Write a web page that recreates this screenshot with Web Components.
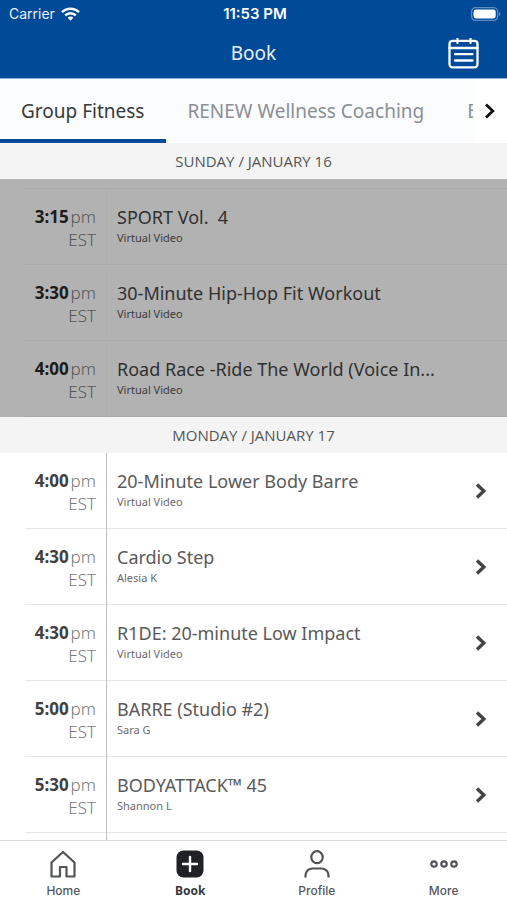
<!DOCTYPE html>
<html lang="en">
<head>
<meta charset="utf-8">
<meta name="viewport" content="width=device-width, initial-scale=1">
<title>Book</title>
<style>
body { margin: 0; font-family: "Noto Sans", "Open Sans", sans-serif; color: #4a4a4a; }
</style>
</head>
<body>
<booking-app></booking-app>

<script>
const define = (name, html, setup) => {
  const template = document.createElement('template');
  template.innerHTML = html;
  customElements.define(name, class extends HTMLElement {
    constructor() {
      super();
      this.attachShadow({ mode: 'open' }).append(template.content.cloneNode(true));
    }
    connectedCallback() { if (setup) setup(this, this.shadowRoot); }
  });
};

define('status-bar', `
<style>
:host { display: grid; grid-template-columns: 1fr auto 1fr; align-items: center; height: 28px; padding: 0 6px 0 9px; font: 400 14px/20px Inter, sans-serif; color: #e9f0fa; }
.left { display: flex; align-items: center; gap: 6px; }
.time { font-weight: 600; font-size: 15px; color: #fff; }
.battery { justify-self: end; }
svg { display: block; }
</style>
<div class="left"><span>Carrier</span>
<svg width="19" height="14" viewBox="0 0 19 14" fill="none" stroke="#fff" stroke-width="2.4"><path d="M1 5.2C5.7.6 13.3.6 18 5.2M4.2 8.4c3-2.9 7.6-2.9 10.6 0"/><path d="M9.500 13.800 6.600 10.800c1.600-1.600 4.200-1.600 5.800 0z" fill="#fff" stroke="none"/></svg></div>
<span class="time">11:53 PM</span>
<svg class="battery" width="30" height="14" viewBox="0 0 30 14"><rect x=".6" y=".6" width="26" height="12.800" rx="4" fill="none" stroke="#5f8cc0" stroke-width="1.200"/><rect x="2.500" y="2.500" width="22.200" height="9" rx="2.400" fill="#fff"/><path d="M28 4.800c2 .8 2 3.600 0 4.400z" fill="#5f8cc0"/></svg>
`);

define('title-bar', `
<style>
:host { display: grid; grid-template-columns: 1fr auto 1fr; align-items: center; height: 50px; padding: 0 28px; color: #e9f0fa; }
h1 { grid-column: 2; margin: 0; font-size: 19px; line-height: 28px; font-weight: 400; }
button { justify-self: end; border: 0; padding: 0; background: none; }
svg { display: block; }
</style>
<h1>Book</h1>
<button aria-label="Calendar"><svg width="31" height="31" viewBox="0 0 31 31" fill="none" stroke="#fff" stroke-width="2.300" stroke-linecap="round"><rect x="1.500" y="2.800" width="28" height="26.500" rx="3"/><path d="M1.500 10h28M9.500 1v4M22.500 1v4M7 16.200h17.500M7 22.500h17.500"/></svg></button>
`);

define('category-tabs', `
<style>
:host { display: flex; height: 64px; background: #fafcfe; }
nav { display: flex; flex: 1; min-width: 0; overflow: hidden; }
a { flex: none; display: flex; align-items: center; padding: 0 22px 0 21px; box-sizing: border-box; border-bottom: 4px solid transparent; font-size: 19px; line-height: 26px; color: #8b8e94; text-decoration: none; white-space: nowrap; }
a.on { color: #37393d; border-color: #004a98; }
a span { padding-top: 4px; }
button { flex: none; width: 34px; border: 0; padding: 0; background: #fff; }
svg { display: block; margin: 0 auto; }
</style>
<nav aria-label="Categories"><a class="on" href="#group"><span>Group Fitness</span></a><a href="#renew"><span>RENEW Wellness Coaching</span></a><a href="#e"><span>E</span></a></nav>
<button aria-label="Next categories"><svg width="12" height="16" viewBox="0 0 12 16" fill="none" stroke="#111" stroke-width="2.800"><path d="M2 1.500 8.800 8 2 14.500"/></svg></button>
`);

define('day-heading', `
<style>
:host { display: block; background: #f4f4f4; }
h2 { margin: 0; font-family: "Open Sans", sans-serif; font-size: 15px; line-height: 36px; font-weight: 400; text-align: center; color: #555; }
</style>
<h2><slot></slot></h2>
`);

define('class-list', `
<style>
:host { display: block; --rule: #e6e6e6; --divider: #bdbdbd; --strong: #404040; --title: #5a5a5a; --muted: #777; --sub: #6a6a6a; }
:host([past]) { background: #b2b2b2; --rule: #a9a9a9; --divider: #afafaf; --strong: #1c1c1c; --title: #303030; --muted: #555; --sub: #3c3c3c; }
</style>
<slot></slot>
`);

define('list-edge', `
<style>
:host { display: block; height: 9px; margin-left: 25px; border-bottom: 1px solid var(--rule); }
</style>
`);

define('list-tail', `
<style>
:host { display: block; height: 76px; margin-left: 106px; border-left: 1px solid var(--divider); }
</style>
`);

define('class-row', `
<style>
:host { display: block; }
button { display: grid; grid-template-columns: 71px 1fr auto; width: 100%; height: 76px; padding: 0 20px 0 25px; border: 0; background: linear-gradient(var(--rule), var(--rule)) 25px 100% / 100% 1px no-repeat; font: inherit; text-align: left; color: inherit; }
.time { text-align: right; padding-top: 16px; font-size: 17px; line-height: 23px; font-weight: 300; color: var(--muted); }
b { font-weight: 700; color: var(--strong); margin-right: 2px; }
.time span { display: block; }
.info { align-self: stretch; min-width: 0; margin-left: 10px; padding: 15px 0 0 10px; border-left: 1px solid var(--divider); box-sizing: border-box; }
.title { display: block; font-size: 18px; line-height: 26px; color: var(--title); white-space: pre; overflow: hidden; text-overflow: ellipsis; }
.sub { display: block; font-size: 11px; line-height: 16px; color: var(--sub); }
svg { align-self: center; display: block; }
:host([past]) svg { visibility: hidden; }
</style>
<button><span class="time"><span><b></b>pm</span><span>EST</span></span>
<span class="info"><span class="title"></span><span class="sub"></span></span>
<svg width="12" height="16" viewBox="0 0 12 16" fill="none" stroke="#444" stroke-width="3.400"><path d="M2 1.500 8.800 8 2 14.500"/></svg></button>
`, (host, root) => {
  root.querySelector('b').textContent = host.getAttribute('time');
  root.querySelector('.title').textContent = host.getAttribute('name');
  root.querySelector('.sub').textContent = host.getAttribute('by');
});

define('nav-item', `
<style>
:host { display: block; flex: 1; }
a { display: flex; flex-direction: column; align-items: center; gap: 4px; padding-top: 9px; font: 500 12px/18px Inter, sans-serif; color: #55585c; text-decoration: none; }
:host([current]) a { font: 700 12px/18px "Noto Sans", sans-serif; color: #36383c; }
</style>
<a href="#"><slot name="icon"></slot><slot></slot></a>
`);

define('bottom-nav', `
<style>
:host { display: flex; height: 60px; box-sizing: border-box; border-top: 1px solid #dcdcdc; background: #fff; }
svg { display: block; }
</style>
<nav-item><svg slot="icon" width="28" height="28" viewBox="0 0 28 28" fill="none" stroke="#505357" stroke-width="2.200" stroke-linejoin="round"><path d="M2.500 12.500 14 2l11.500 10.500V26.500h-8V17h-6.500v9.500H2.500z"/></svg>Home</nav-item>
<nav-item current><svg slot="icon" width="28" height="28" viewBox="0 0 28 28"><rect x=".5" y=".5" width="27" height="27" rx="7" fill="#1f2124"/><path d="M14 7v14M7 14h14" stroke="#fff" stroke-width="2.400" stroke-linecap="round"/></svg>Book</nav-item>
<nav-item><svg slot="icon" width="28" height="28" viewBox="0 0 28 28" fill="none" stroke="#505357" stroke-width="2.200"><ellipse cx="14" cy="7.200" rx="5.700" ry="6"/><path d="M2.500 27.500v-2.300c0-3.800 3-6.700 7-6.700h9c4 0 7 2.900 7 6.700v2.300"/></svg>Profile</nav-item>
<nav-item><svg slot="icon" width="28" height="28" viewBox="0 0 28 28" fill="none" stroke="#505357" stroke-width="2.200"><circle cx="4" cy="14" r="2.700"/><circle cx="14" cy="14" r="2.700"/><circle cx="24" cy="14" r="2.700"/></svg>More</nav-item>
`);

define('booking-app', `
<style>
:host { display: flex; flex-direction: column; height: 100vh; background: #fff; }
header { background: #004a98; border-bottom: 1px solid #8fb3da; }
main { flex: 1; min-height: 0; overflow: hidden; }
</style>
<header><status-bar></status-bar><title-bar></title-bar></header>
<category-tabs></category-tabs>
<main>
<day-heading>SUNDAY / JANUARY 16</day-heading>
<class-list past>
<list-edge></list-edge>
<class-row past time="3:15" name="SPORT Vol.  4" by="Virtual Video"></class-row>
<class-row past time="3:30" name="30-Minute Hip-Hop Fit Workout" by="Virtual Video"></class-row>
<class-row past time="4:00" name="Road Race -Ride The World (Voice In..." by="Virtual Video"></class-row>
</class-list>
<day-heading>MONDAY / JANUARY 17</day-heading>
<class-list>
<class-row time="4:00" name="20-Minute Lower Body Barre" by="Virtual Video"></class-row>
<class-row time="4:30" name="Cardio Step" by="Alesia K"></class-row>
<class-row time="4:30" name="R1DE: 20-minute Low Impact" by="Virtual Video"></class-row>
<class-row time="5:00" name="BARRE (Studio #2)" by="Sara G"></class-row>
<class-row time="5:30" name="BODYATTACK™ 45" by="Shannon L"></class-row>
<list-tail></list-tail>
</class-list>
</main>
<bottom-nav></bottom-nav>
`);
</script>
</body>
</html>
